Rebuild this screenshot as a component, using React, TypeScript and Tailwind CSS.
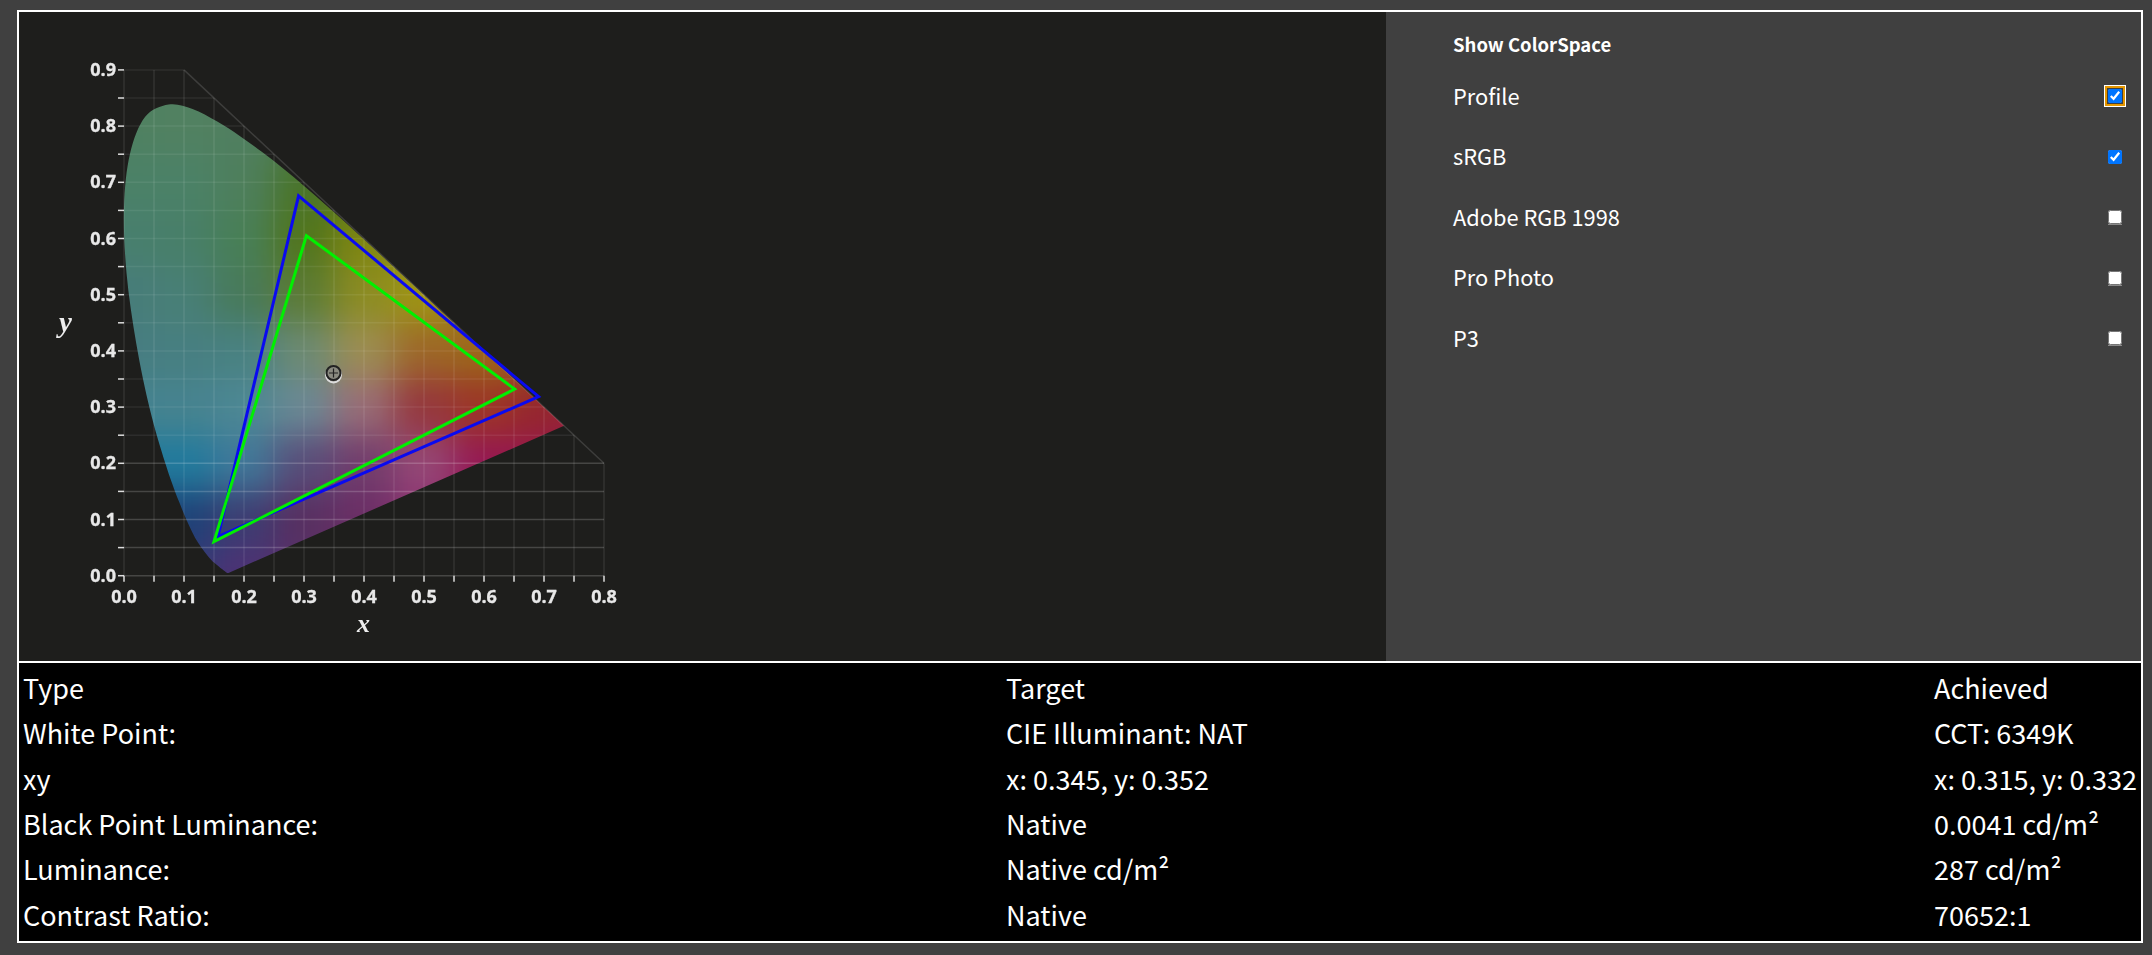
const FONT = "font-['Noto_Sans_CJK_JP','Noto_Sans',sans-serif]";

// chart coordinates: 60px per 0.1 in x, 56.2px per 0.1 in y
const px = (x: number) => 124 + x * 600;
const py = (y: number) => 575.7 - y * 562;

const LOCUS = [
  [0.1741, 0.005], [0.1714, 0.0051], [0.1644, 0.0109], [0.1566, 0.0177], [0.144, 0.0297], [0.1241, 0.0578],
  [0.1096, 0.0868], [0.0913, 0.1327], [0.0687, 0.2007], [0.0434, 0.295], [0.0205, 0.4127], [0.0042, 0.5384],
  [0, 0.6548], [0.0099, 0.7502], [0.035, 0.816], [0.0743, 0.8385], [0.1142, 0.8305], [0.1547, 0.8085],
  [0.1929, 0.7826], [0.2296, 0.7543], [0.2658, 0.7243], [0.3016, 0.6923], [0.3373, 0.6589], [0.3731, 0.6245],
  [0.4087, 0.5896], [0.4441, 0.5547], [0.4788, 0.5202], [0.5125, 0.4866], [0.5448, 0.4544], [0.5752, 0.4242],
  [0.6029, 0.3965], [0.627, 0.3725], [0.6658, 0.334], [0.6915, 0.3083], [0.7079, 0.292], [0.719, 0.2809],
  [0.726, 0.274], [0.7334, 0.2666],
];

// catmull-rom through the locus points, closed by the straight line of purples
function locusPath() {
  const p = LOCUS.map(([x, y]) => [px(x), py(y)]);
  let d = `M${p[0][0]} ${p[0][1]}`;
  for (let i = 0; i < p.length - 1; i++) {
    const a = p[Math.max(0, i - 1)];
    const b = p[i];
    const c = p[i + 1];
    const e = p[Math.min(p.length - 1, i + 2)];
    d += `C${b[0] + (c[0] - a[0]) / 6} ${b[1] + (c[1] - a[1]) / 6} ${c[0] - (e[0] - b[0]) / 6} ${c[1] - (e[1] - b[1]) / 6} ${c[0]} ${c[1]}`;
  }
  return d + "Z";
}

// rough colour samples, one row per 0.1 of y (0.9 down to 0.0), one column per 0.1 of x
const COLORS = [
  ["#568a68", "#568a68", "#568a68", "#568a68", "#568a68", "#568a68", "#568a68", "#568a68", "#568a68"],
  ["#548a68", "#568a68", "#558866", "#548658", "#54865a", "#54865a", "#54865a", "#54865a", "#54865a"],
  ["#508a6e", "#508a6e", "#538862", "#4e7c2c", "#567d1e", "#788810", "#788810", "#788810", "#788810"],
  ["#4d8876", "#4d8870", "#4d885c", "#567d1e", "#889010", "#a09a10", "#a09a10", "#a09a10", "#a09a10"],
  ["#4b8682", "#4d887e", "#4d8360", "#628438", "#969624", "#aaa012", "#ae8a10", "#ae7a12", "#ae7a12"],
  ["#4b868a", "#4b888a", "#4e8a8a", "#74947a", "#a89858", "#a96e2a", "#a86e1a", "#a8581a", "#a8581a"],
  ["#488c9a", "#4a8c9a", "#52929f", "#72929f", "#a4747f", "#a03a40", "#a83828", "#a02830", "#a01c48"],
  ["#2283a8", "#2283a8", "#4480a4", "#5e5282", "#7a4074", "#a04c7e", "#a01858", "#a01850", "#a01850"],
  ["#1e4680", "#1e4680", "#40407a", "#5e3268", "#72306c", "#98347a", "#a01870", "#a01850", "#a01850"],
  ["#383e7e", "#383e7e", "#52347c", "#5e3270", "#72306c", "#98347a", "#a01870", "#a01850", "#a01850"],
];

const TICKS = Array.from({ length: 19 }, (_, i) => i * 0.05);
const XTICKS = Array.from({ length: 17 }, (_, i) => i * 0.05);
const tri = (pts: number[][]) => pts.map(([x, y]) => `${px(x)},${py(y)}`).join(" ");

function Chromaticity() {
  return (
    <svg viewBox="19 12 700 649" className="h-[649px] w-[700px] shrink-0">
      <defs>
        <clipPath id="locus">
          <path d={locusPath()} />
        </clipPath>
        <filter id="mesh" x="-10%" y="-10%" width="120%" height="120%" colorInterpolationFilters="sRGB">
          <feGaussianBlur stdDeviation="17" />
        </filter>
        <filter id="soft" colorInterpolationFilters="sRGB">
          <feGaussianBlur stdDeviation="0.35" />
        </filter>
      </defs>
      <g clipPath="url(#locus)" opacity="0.92">
        <g filter="url(#mesh)">
          {COLORS.map((row, r) =>
            row.map((c, i) => (
              <rect
                key={`${r}-${i}`}
                x={px(i * 0.1) - (i === 0 ? 130 : 30)}
                y={py(0.9 - r * 0.1) - (r === 0 ? 130 : 28.1)}
                width={i === 0 || i === 8 ? 160 : 61}
                height={r === 0 || r === 9 ? 158 : 57}
                fill={c}
              />
            )),
          )}
        </g>
      </g>
      <g filter="url(#soft)" stroke="#fff" fill="none">
        {TICKS.map((t) => {
          const y = Number(t.toFixed(2));
          return (
            <g key={y}>
              <line x1={px(0)} x2={px(Math.min(0.8, 1 - y))} y1={py(y)} y2={py(y)} strokeOpacity={y < 0.21 ? 0.18 : 0.07} strokeWidth="1.5" />
              <line x1={px(0) - 6} x2={px(0)} y1={py(y)} y2={py(y)} strokeOpacity="0.85" strokeWidth="1.5" />
            </g>
          );
        })}
        {XTICKS.map((t) => {
          const x = Number(t.toFixed(2));
          return (
            <g key={x}>
              <line x1={px(x)} x2={px(x)} y1={py(0)} y2={py(Math.min(0.9, 1 - x))} strokeOpacity="0.09" strokeWidth="1.5" />
              <line x1={px(x)} x2={px(x)} y1={py(0)} y2={py(0) + 6} strokeOpacity="0.85" strokeWidth="1.5" />
            </g>
          );
        })}
        <line x1={px(0.1)} y1={py(0.9)} x2={px(0.8)} y2={py(0.2)} strokeOpacity="0.14" strokeWidth="1.5" />
      </g>
      <g filter="url(#soft)" fill="#e8e8e8" stroke="#e8e8e8" strokeWidth="0.3" fontSize="18" fontWeight="700" fontFamily="'Open Sans', sans-serif">
        {[0, 1, 2, 3, 4, 5, 6, 7, 8, 9].map((n) => (
          <text key={n} x={px(0) - 8} y={py(n / 10) + 6} textAnchor="end">
            {(n / 10).toFixed(1)}
          </text>
        ))}
        {[0, 1, 2, 3, 4, 5, 6, 7, 8].map((n) => (
          <text key={n} x={px(n / 10)} y={py(0) + 27} textAnchor="middle">
            {(n / 10).toFixed(1)}
          </text>
        ))}
      </g>
      <g filter="url(#soft)" fill="#eee" fontFamily="'Liberation Serif', serif" fontStyle="italic" fontWeight="700">
        <text x="59" y="332" fontSize="29">y</text>
        <text x="357" y="632" fontSize="26">x</text>
      </g>
      <polygon points={tri([[0.291, 0.676], [0.691, 0.3185], [0.1565, 0.0694]])} fill="none" stroke="#0a0af0" strokeWidth="3" />
      <polygon points={tri([[0.304, 0.605], [0.651, 0.332], [0.15, 0.0605]])} fill="none" stroke="#00f000" strokeWidth="3" />
      <g fill="none" filter="url(#soft)">
        <circle cx="333.5" cy="375" r="7.5" stroke="#ddd" strokeWidth="2" />
        <circle cx="333.5" cy="373" r="7" stroke="#222" strokeWidth="2" fill="#8a8a80" />
        <path d="M333.5 368.5v9M329 373h9" stroke="#222" strokeWidth="1.2" />
      </g>
    </svg>
  );
}

const SPACES = [
  { name: "Profile", cls: "shadow-[0_0_0_1px_#404040,0_0_0_3px_#e59700,0_0_0_4px_#fff]", checked: true },
  { name: "sRGB", cls: "", checked: true },
  { name: "Adobe RGB 1998", cls: "shadow-[0_1px_0_#8a8a8a]", checked: false },
  { name: "Pro Photo", cls: "shadow-[0_1px_0_#8a8a8a]", checked: false },
  { name: "P3", cls: "shadow-[0_1px_0_#8a8a8a]", checked: false },
];

const ROWS = [
  ["Type", "Target", "Achieved"],
  ["White Point:", "CIE Illuminant: NAT", "CCT: 6349K"],
  ["xy", "x: 0.345, y: 0.352", "x: 0.315, y: 0.332"],
  ["Black Point Luminance:", "Native", "0.0041 cd/m²"],
  ["Luminance:", "Native cd/m²", "287 cd/m²"],
  ["Contrast Ratio:", "Native", "70652:1"],
];

export default function App() {
  return (
    <div className={`h-[955px] w-full bg-[#404040] pl-[17px] pr-[9px] pt-[10px] ${FONT}`}>
      <div className="flex h-[933px] flex-col border-2 border-white">
        <div className="flex h-[649px] shrink-0">
          <div className="flex-1 bg-[#1e1e1c]">
            <Chromaticity />
          </div>
          <div className="w-[755px] bg-[#404040] pl-[67px] pr-[18px] pt-[20px] text-white">
            <h2 className="text-[18.5px] font-bold leading-[24px]">Show ColorSpace</h2>
            <div className="mt-[10px] flex flex-col">
              {SPACES.map((s) => (
                <label key={s.name} className="flex h-[60.5px] items-center justify-between text-[21.8px]">
                  <span>{s.name}</span>
                  <input
                    type="checkbox"
                    defaultChecked={s.checked}
                    className={`mr-[1px] h-[14px] w-[14px] rounded-[3px] ${s.cls}`}
                  />
                </label>
              ))}
            </div>
          </div>
        </div>
        <div className="flex-1 border-t-2 border-white bg-black pl-[4px] pt-[2px] text-[27px] text-white">
          {ROWS.map((r) => (
            <div key={r[0]} className="grid h-[45.3px] grid-cols-[983px_928px_1fr] items-center leading-none whitespace-nowrap">
              <span>{r[0]}</span>
              <span>{r[1]}</span>
              <span>{r[2]}</span>
            </div>
          ))}
        </div>
      </div>
    </div>
  );
}
